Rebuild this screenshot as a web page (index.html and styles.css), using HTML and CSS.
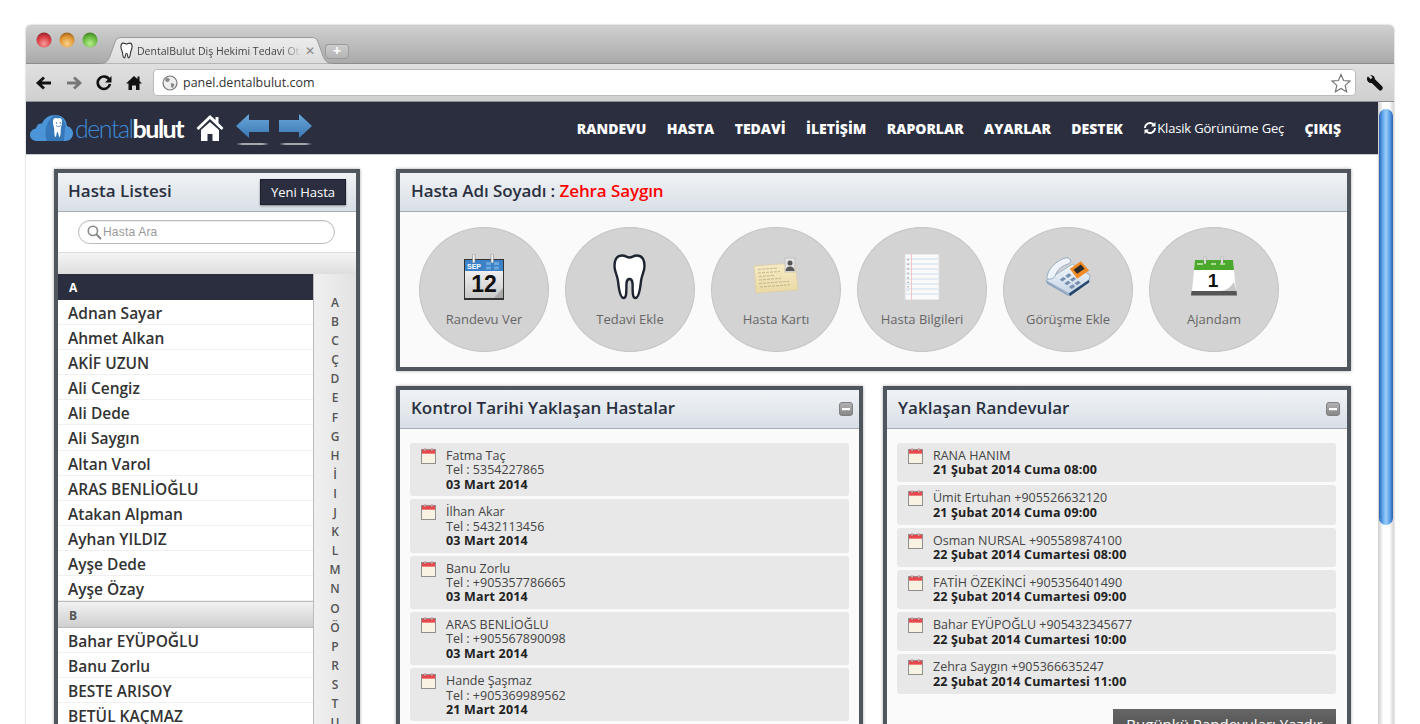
FILE: index.html
```html
<!DOCTYPE html>
<html lang="tr">
<head>
<meta charset="utf-8">
<title>DentalBulut</title>
<link rel="stylesheet" href="styles.css">
</head>
<body>
<svg class="defs" width="0" height="0">
  <defs>
    <radialGradient id="lr" cx=".5" cy=".75" r=".7"><stop offset="0" stop-color="#f89a9a"/><stop offset=".7" stop-color="#d63a40"/><stop offset="1" stop-color="#9c2a30"/></radialGradient>
    <radialGradient id="ly" cx=".5" cy=".75" r=".7"><stop offset="0" stop-color="#fbd08c"/><stop offset=".7" stop-color="#dd9530"/><stop offset="1" stop-color="#a86c20"/></radialGradient>
    <radialGradient id="lg" cx=".5" cy=".75" r=".7"><stop offset="0" stop-color="#b8ee8e"/><stop offset=".7" stop-color="#66b83c"/><stop offset="1" stop-color="#4a8a2a"/></radialGradient>
    <linearGradient id="arrow" x1="0" y1="0" x2="0" y2="1"><stop offset="0" stop-color="#6aa6d8"/><stop offset="1" stop-color="#3a78b4"/></linearGradient>
    <linearGradient id="paper" x1="0" y1="0" x2="0" y2="1"><stop offset="0" stop-color="#fff"/><stop offset="1" stop-color="#c9c9c9"/></linearGradient>
    <linearGradient id="card" x1="0" y1="0" x2="0" y2="1"><stop offset="0" stop-color="#f6ebc6"/><stop offset="1" stop-color="#ead9a4"/></linearGradient>
    <linearGradient id="tabfill" x1="0" y1="0" x2="0" y2="1"><stop offset="0" stop-color="#ececec"/><stop offset="1" stop-color="#dcdcdc"/></linearGradient>
    <linearGradient id="mingrad" x1="0" y1="0" x2="0" y2="1"><stop offset="0" stop-color="#b4b4b4"/><stop offset="1" stop-color="#858585"/></linearGradient>
    <linearGradient id="phone" x1="0" y1="0" x2="0" y2="1"><stop offset="0" stop-color="#f2f6fb"/><stop offset="1" stop-color="#c6d6e8"/></linearGradient>
    <symbol id="cal" viewBox="0 0 16 17">
      <rect x=".5" y="1.500" width="15" height="15" fill="#f8f2e2" stroke="#8a8a8a"/>
      <rect x="1" y="2" width="14" height="4" fill="#e8474c"/>
      <rect x="3.500" y=".5" width="1.600" height="3" rx=".8" fill="#ddd" stroke="#a33" stroke-width=".4"/>
      <rect x="10.800" y=".5" width="1.600" height="3" rx=".8" fill="#ddd" stroke="#a33" stroke-width=".4"/>
    </symbol>
    <symbol id="minus" viewBox="0 0 14 14">
      <rect x=".5" y=".5" width="13" height="13" rx="2.500" fill="url(#mingrad)" stroke="#808080"/>
      <rect x="3" y="6" width="8" height="2.200" fill="#fff"/>
    </symbol>
  </defs>
</svg>
<div class="window">
  <div class="tabstrip">
    <div class="lights">
      <svg class="light" viewBox="0 0 16 16"><circle cx="8" cy="8" r="7.500" fill="url(#lr)"/></svg>
      <svg class="light" viewBox="0 0 16 16"><circle cx="8" cy="8" r="7.500" fill="url(#ly)"/></svg>
      <svg class="light" viewBox="0 0 16 16"><circle cx="8" cy="8" r="7.500" fill="url(#lg)"/></svg>
    </div>
    <div class="tab">
      <svg class="tabshape" viewBox="0 0 233 27"><path d="M0 26.500C6 26.500 8 24 10 19L15 5C16 2 18 .5 21 .5H212C215 .5 217 2 218 5L223 19C225 24 227 26.500 233 26.500" fill="url(#tabfill)" stroke="#999"/></svg>
      <svg class="fav" viewBox="0 0 14 18"><path d="M3.500 1C1.500 1 1 3 1 5c0 3 1.500 4 1.800 7 .2 2 .6 5 1.900 5 1.200 0 .8-5 2.300-5s1.100 5 2.300 5c1.300 0 1.700-3 1.900-5 .3-3 1.800-4 1.800-7 0-2-.5-4-2.500-4C9 1 8.500 2 7 2S5 1 3.500 1z" fill="#fff" stroke="#333" stroke-width="1.200"/></svg>
      <span class="tab-title">DentalBulut Diş Hekimi Tedavi Ot</span>
      <span class="tab-x">✕</span>
    </div>
    <div class="newtab"><span>+</span></div>
  </div>
  <div class="toolbar">
    <svg class="tb" viewBox="0 0 18 16"><path d="M16 8H4M9 2.500 3 8l6 5.500" fill="none" stroke="#111" stroke-width="2.800"/></svg>
    <svg class="tb" viewBox="0 0 18 16"><path d="M2 8h12M9 2.500 15 8l-6 5.500" fill="none" stroke="#777" stroke-width="2.800"/></svg>
    <svg class="tb" viewBox="0 0 18 16"><path d="M14.500 5A6.200 6.200 0 1 0 15 9" fill="none" stroke="#111" stroke-width="2.600"/><path d="M16.500 1v6.500H10z" fill="#111"/></svg>
    <svg class="tb" viewBox="0 0 18 16"><path d="M9 1 1 8.500h2.500V15H7v-4.500h4V15h3.500V8.500H17L14.500 6V1.500H12.500V4z" fill="#111"/></svg>
    <div class="urlbar">
      <svg class="globe" viewBox="0 0 16 16"><circle cx="8" cy="8" r="7" fill="#eee" stroke="#777" stroke-width="1.200"/><path d="M5 2.500 8 4 7 6.500 4.500 7 3 5zM9 8l3.500 1-1.500 4-2-1z" fill="#888"/></svg>
      <span class="url">panel.dentalbulut.com</span>
      <svg class="star" viewBox="0 0 20 20"><path d="M10 1.500 12.600 7.500l6.400.6-4.800 4.300 1.400 6.300L10 15.400l-5.600 3.300 1.400-6.300L1 8.100l6.400-.6z" fill="#fff" stroke="#777" stroke-width="1.200"/></svg>
    </div>
    <svg class="wrench" viewBox="0 0 18 18"><path d="M2 1.500 5 4.500 7 2.500 4.500.5C7 0 9.500 1.500 9.500 4.500L17 12c1 1 1 2 .2 3.500-1 1.500-2.500 1.500-3.500.5L6 8.500C3 8.800.8 6.500 1 3.500z" fill="#111" transform="translate(0 1)"/></svg>
  </div>
  <div class="viewport">
    <div class="page">
      <header class="nav">
        <div class="brand">
          <svg class="cloud" viewBox="0 0 43 28"><path d="M7 27C3 27 0 24.500 0 21c0-3.500 2.500-6 6-6.500C6.500 11 9 9 12 9.500 14.500 4 19 1 25 1c7 0 11.500 4.500 12 11 3.500 1 6 3.500 6 7.500C43 24 39.500 27 35.500 27z" fill="#4b94d8"/><path d="M17 27C13.500 19 15.500 8 24 1.500c7 .5 11 5 11.500 10.500-1 5-1 10-1.500 15z" fill="#3577b8"/><path d="M26 4c-2.500 0-3 1.300-3 4 0 3.500 1 4 1.200 7 .1 2 .1 8 1.300 8 1.100 0 .8-5 2-5s.9 5 2 5c1.200 0 1.200-6 1.300-8 .2-3 1.200-3.500 1.200-7 0-2.700-.5-4-3-4-1 0-1 .5-1.500.5S27 4 26 4z" fill="#fff"/><circle cx="26.500" cy="9" r=".8" fill="#3577b8"/><circle cx="30.500" cy="9" r=".8" fill="#3577b8"/><path d="M26 11.500c1.500 1.500 3.500 1.500 5 0" fill="none" stroke="#3577b8" stroke-width=".8"/></svg>
          <span class="logo-text"><span class="logo-thin">dental</span><span class="logo-bold">bulut</span></span>
          <svg class="home" viewBox="0 0 28 28"><path d="M14 1 .5 14l2 2L14 5l11.500 11 2-2-5-5V3h-3v3z" fill="#fff"/><path d="M5 16 14 8l9 8v11h-6.500v-7h-5v7H5z" fill="#fff"/></svg>
          <div class="arrow-wrap">
            <div class="arrow-item"><svg class="arrow" viewBox="0 0 33 24"><path d="M0 12 13 0v6h20v12H13v6z" fill="url(#arrow)"/></svg></div>
            <div class="arrow-item"><svg class="arrow" viewBox="0 0 33 24"><path d="M33 12 20 0v6H0v12h20v6z" fill="url(#arrow)"/></svg></div>
          </div>
        </div>
        <nav class="menu">
          <a class="m">RANDEVU</a><a class="m">HASTA</a><a class="m">TEDAVİ</a><a class="m">İLETİŞİM</a><a class="m">RAPORLAR</a><a class="m">AYARLAR</a><a class="m">DESTEK</a>
          <a class="m-classic"><svg class="sync" viewBox="0 0 14 14"><path d="M2 7a5 5 0 0 1 8.500-3.500M12 7a5 5 0 0 1-8.500 3.500" fill="none" stroke="#fff" stroke-width="1.800"/><path d="M12.500 1v4.500H8zM1.500 13V8.500H6z" fill="#fff"/></svg>Klasik Görünüme Geç</a>
          <a class="m">ÇIKIŞ</a>
        </nav>
      </header>
      <div class="content">
        <aside class="panel side">
          <div class="phead"><h2>Hasta Listesi</h2><span class="newbtn">Yeni Hasta</span></div>
          <div class="searchrow"><div class="search">
            <svg class="mag" viewBox="0 0 14 14"><circle cx="5.500" cy="5.500" r="4.300" fill="none" stroke="#888" stroke-width="1.500"/><path d="M8.500 8.500 13 13" stroke="#888" stroke-width="2"/></svg>
            <span>Hasta Ara</span></div></div>
          <div class="strip"></div>
          <div class="listwrap">
            <div class="list">
              <div class="lh lh-dark">A</div>
              <div class="row">Adnan Sayar</div><div class="row">Ahmet Alkan</div><div class="row">AKİF UZUN</div><div class="row">Ali Cengiz</div><div class="row">Ali Dede</div><div class="row">Ali Saygın</div><div class="row">Altan Varol</div><div class="row">ARAS BENLİOĞLU</div><div class="row">Atakan Alpman</div><div class="row">Ayhan YILDIZ</div><div class="row">Ayşe Dede</div><div class="row">Ayşe Özay</div>
              <div class="lh">B</div>
              <div class="row">Bahar EYÜPOĞLU</div><div class="row">Banu Zorlu</div><div class="row">BESTE ARISOY</div><div class="row">BETÜL KAÇMAZ</div>
            </div>
            <div class="alpha"><span>A</span><span>B</span><span>C</span><span>Ç</span><span>D</span><span>E</span><span>F</span><span>G</span><span>H</span><span>İ</span><span>I</span><span>J</span><span>K</span><span>L</span><span>M</span><span>N</span><span>O</span><span>Ö</span><span>P</span><span>R</span><span>S</span><span>T</span><span>U</span></div>
          </div>
        </aside>
        <main class="main">
          <section class="panel summary">
            <div class="phead"><h2>Hasta Adı Soyadı : <span class="red">Zehra Saygın</span></h2></div>
            <div class="circles">
              <div class="circle">
                <svg class="ci" viewBox="0 0 42 46"><path d="M1 5h40v41H1z" fill="#333"/><rect x="2" y="6" width="38" height="38" fill="url(#paper)"/><rect x="2" y="6" width="38" height="11" fill="#3b82c8"/><path d="M23 8h5v3h-5zM31 8h5v3h-5zM23 12.500h5v3h-5zM31 12.500h5v3h-5z" fill="#6aa6dc"/><text x="4" y="14.500" class="cal-m">SEP</text><text x="21" y="38" class="cal-d" text-anchor="middle">12</text><rect x="9.500" y="0" width="2.500" height="9" rx="1.200" fill="#f2f2f2" stroke="#777" stroke-width=".5"/><rect x="28" y="0" width="2.500" height="9" rx="1.200" fill="#f2f2f2" stroke="#777" stroke-width=".5"/><path d="M40 34 31 44h9z" fill="#aaa"/></svg>
                <span class="clabel">Randevu Ver</span>
              </div>
              <div class="circle">
                <svg class="ci" viewBox="0 0 42 46"><path d="M13 1.500C7 1.500 5.500 7 5.500 12c0 6 2.500 8 3.500 15 .6 5 1.500 17 5.500 17s2.500-11 3-15c.3-2.500 1.500-4 3-4s2.700 1.500 3 4c.5 4-1 15 3 15s4.900-12 5.500-17c1-7 3.500-9 3.500-15 0-5-1.500-10.500-7.500-10.500-4 0-4.500 2-7.500 2s-3.500-2-7.500-2z" fill="#fff" stroke="#1e2430" stroke-width="2.400"/></svg>
                <span class="clabel">Tedavi Ekle</span>
              </div>
              <div class="circle">
                <svg class="ci" viewBox="0 0 46 46"><path d="M1 12 42 9l3 27L3 39z" fill="url(#card)" stroke="#dccb98" stroke-width=".6"/><path d="M5 15.500l20-1.500M5 19l22-1.500M6 22.500l16-1.200M6 26l22-1.600M6 29.500l30-2.200M7 33l30-2.200" stroke="#a89a70" stroke-width=".6" stroke-dasharray="3 1"/><rect x="32" y="4" width="10" height="14" fill="#e2e2e2" stroke="#aaa" stroke-width=".5"/><circle cx="37" cy="9" r="2.500" fill="#555"/><path d="M32.500 17c0-3 2-4.500 4.500-4.500s4.500 1.500 4.500 4.500z" fill="#555"/></svg>
                <span class="clabel">Hasta Kartı</span>
              </div>
              <div class="circle">
                <svg class="ci" viewBox="0 0 42 46"><rect x="4" y="0" width="34" height="46" fill="#fafafa" stroke="#ddd"/><path d="M5 5h32M5 10h32M5 15h32M5 20h32M5 25h32M5 30h32M5 35h32M5 40h32" stroke="#cddced"/><path d="M10.500 0v46" stroke="#f3c4c4"/><path d="M7 5v32" stroke="#aaa" stroke-dasharray="1.500 3" stroke-width="1.500"/></svg>
                <span class="clabel">Hasta Bilgileri</span>
              </div>
              <div class="circle">
                <svg class="ci" viewBox="0 0 50 42"><path d="M1 25 30 7l19 12-1 5-22 15z" fill="url(#phone)" stroke="#6c88a6" stroke-width=".6"/><path d="M1 25 26 40v2L2 28z" fill="#8aa4c0"/><path d="M26 39 48 24v3L27 42z" fill="#24466e"/><path d="M27 12 39 4l9 10-13 9z" fill="#f08a24"/><path d="M31 13l8-5.500 4 4.500-8 5.500z" fill="#2a2a2a"/><path d="M2 22C3 12 12 3 23 0c3 0 5 2 5 4s-3 3-6 4c-6 3-9 6-11 12-2 4-9 4-9 2z" fill="#eef3f9" stroke="#7c96b2" stroke-width=".8"/><path d="M16 24l4-3 3 2-4 3zM22 20l4-3 3 2-4 3zM21 28l4-3 3 2-4 3zM27 24l4-3 3 2-4 3zM26 32l4-3 3 2-4 3zM32 28l4-3 3 2-4 3z" fill="#7890ac"/></svg>
                <span class="clabel">Görüşme Ekle</span>
              </div>
              <div class="circle">
                <svg class="ci" viewBox="0 0 46 42"><path d="M4 4h38l3 31H1z" fill="#fff"/><path d="M.5 35h45l.5 4.500H0z" fill="#555"/><path d="M4 4h38l1 10H3z" fill="#4aa82c"/><path d="M6 7h6v2H6zM20 7h5v2h-5zM29 7h5v2h-5z" fill="#a8dc8e"/><path d="M28 35c7 0 11-3 15-9l2 9z" fill="#c8c8c8"/><rect x="13" y="0" width="2" height="8" rx="1" fill="#eee" stroke="#888" stroke-width=".4"/><rect x="30" y="0" width="2" height="8" rx="1" fill="#eee" stroke="#888" stroke-width=".4"/><text x="22" y="31" class="cal-g" text-anchor="middle">1</text></svg>
                <span class="clabel">Ajandam</span>
              </div>
            </div>
          </section>
          <div class="cols">
            <section class="panel col col-left">
              <div class="phead"><h2>Kontrol Tarihi Yaklaşan Hastalar</h2><svg class="min"><use href="#minus"/></svg></div>
              <div class="items">
                <div class="item tall"><svg class="ical"><use href="#cal"/></svg><div class="it">Fatma Taç<br>Tel : 5354227865<br><b>03 Mart 2014</b></div></div>
                <div class="item tall"><svg class="ical"><use href="#cal"/></svg><div class="it">İlhan Akar<br>Tel : 5432113456<br><b>03 Mart 2014</b></div></div>
                <div class="item tall"><svg class="ical"><use href="#cal"/></svg><div class="it">Banu Zorlu<br>Tel : +905357786665<br><b>03 Mart 2014</b></div></div>
                <div class="item tall"><svg class="ical"><use href="#cal"/></svg><div class="it">ARAS BENLİOĞLU<br>Tel : +905567890098<br><b>03 Mart 2014</b></div></div>
                <div class="item tall"><svg class="ical"><use href="#cal"/></svg><div class="it">Hande Şaşmaz<br>Tel : +905369989562<br><b>21 Mart 2014</b></div></div>
              </div>
            </section>
            <section class="panel col col-right">
              <div class="phead"><h2>Yaklaşan Randevular</h2><svg class="min"><use href="#minus"/></svg></div>
              <div class="items">
                <div class="item"><svg class="ical"><use href="#cal"/></svg><div class="it">RANA HANIM<br><b>21 Şubat 2014 Cuma 08:00</b></div></div>
                <div class="item"><svg class="ical"><use href="#cal"/></svg><div class="it">Ümit Ertuhan +905526632120<br><b>21 Şubat 2014 Cuma 09:00</b></div></div>
                <div class="item"><svg class="ical"><use href="#cal"/></svg><div class="it">Osman NURSAL +905589874100<br><b>22 Şubat 2014 Cumartesi 08:00</b></div></div>
                <div class="item"><svg class="ical"><use href="#cal"/></svg><div class="it">FATİH ÖZEKİNCİ +905356401490<br><b>22 Şubat 2014 Cumartesi 09:00</b></div></div>
                <div class="item"><svg class="ical"><use href="#cal"/></svg><div class="it">Bahar EYÜPOĞLU +905432345677<br><b>22 Şubat 2014 Cumartesi 10:00</b></div></div>
                <div class="item"><svg class="ical"><use href="#cal"/></svg><div class="it">Zehra Saygın +905366635247<br><b>22 Şubat 2014 Cumartesi 11:00</b></div></div>
                <div class="printrow"><span class="print">Bugünkü Randevuları Yazdır</span></div>
              </div>
            </section>
          </div>
        </main>
      </div>
    </div>
    <div class="scrollbar"><div class="thumb"></div></div>
  </div>
</div>
</body>
</html>
```
FILE: styles.css
```css
* { box-sizing: border-box; }
html, body { margin: 0; height: 724px; overflow: hidden; background: #fff; }
body { padding: 25px 26px 0; font-family: "Open Sans", "Liberation Sans", sans-serif; color: #333; }
.defs { display: block; height: 0; }
.window { width: 1368px; height: 760px; border-radius: 5px 5px 0 0; box-shadow: 0 0 2px rgba(0,0,0,.35); display: flex; flex-direction: column; overflow: hidden; }

.tabstrip { height: 39px; flex: none; background: linear-gradient(#d0d0d0, #aaa); border-bottom: 1px solid #8c8c8c; display: flex; align-items: flex-end; padding-left: 10px; }
.lights { display: flex; gap: 7px; align-self: flex-start; padding-top: 7px; }
.light { width: 16px; height: 16px; display: block; }
.tab { width: 233px; height: 27px; margin-left: 2px; position: relative; display: flex; align-items: center; padding-left: 20px; z-index: 1; margin-bottom: -1px; }
.tabshape { position: absolute; inset: 0; width: 233px; height: 27px; z-index: -1; }
.fav { width: 13px; height: 17px; flex: none; }
.tab-title { width: 165px; margin-left: 4px; font-size: 10.500px; color: #444; white-space: nowrap; overflow: hidden; -webkit-mask-image: linear-gradient(90deg, #000 88%, transparent); mask-image: linear-gradient(90deg, #000 88%, transparent); }
.tab-x { font-size: 12px; color: #888; font-weight: 700; margin-left: 3px; font-family: "DejaVu Sans", sans-serif; }
.newtab { width: 24px; height: 15px; margin: 0 0 4px -8px; background: linear-gradient(#ccc, #b4b4b4); border: 1px solid #999; border-radius: 3px 3px 4px 4px; color: #fff; font-size: 14px; font-weight: 700; line-height: 12px; text-align: center; }

.toolbar { height: 38px; flex: none; background: linear-gradient(#e0e0e0, #cfcfcf); border-bottom: 1px solid #8f8f8f; display: flex; align-items: center; padding: 0 7px 0 9px; gap: 12px; }
.tb { width: 18px; height: 16px; flex: none; }
.urlbar { width: 1203px; height: 27px; margin-left: -2px; background: #fff; border: 1px solid #bbb; border-radius: 4px; display: flex; align-items: center; padding: 0 4px 0 8px; }
.globe { width: 16px; height: 16px; flex: none; }
.url { margin-left: 5px; font-size: 12.500px; color: #333; flex: 1; }
.star { width: 20px; height: 20px; flex: none; }
.wrench { width: 17px; height: 17px; flex: none; margin-left: -2px; }

.viewport { flex: 1; display: flex; min-height: 0; }
.page { flex: 1; min-width: 0; }
.scrollbar { width: 16px; flex: none; background: linear-gradient(90deg, #cfcfcf, #fff 35%, #fff 70%, #d4d4d4); padding: 7px 1px 0 1px; }
.thumb { height: 416px; border-radius: 7px; background: linear-gradient(90deg, #2a62b0, #5da3ea 25%, #9ccdf6 50%, #5da3ea 75%, #2a62b0); }

.nav { height: 53px; background: #2a2e3f; display: flex; align-items: center; justify-content: space-between; padding: 0 37px 0 4px; border-bottom: 1px solid #c9ccd2; }
.brand { display: flex; align-items: center; }
.cloud { width: 43px; height: 28px; flex: none; }
.logo-text { font-size: 25px; letter-spacing: -1.500px; margin-left: 2px; line-height: 1; font-family: "Lato", sans-serif; }
.logo-thin { font-weight: 300; color: #3d8bd8; }
.logo-bold { font-weight: 700; color: #fff; }
.home { width: 28px; height: 28px; margin-left: 13px; flex: none; }
.arrow-wrap { display: flex; gap: 10px; margin: 3px 0 0 12px; }
.arrow-item { display: flex; flex-direction: column; gap: 5px; }
.arrow-item::after { content: ""; height: 2px; background: linear-gradient(90deg, transparent, #a4a6ae 20%, #a4a6ae 80%, transparent); }
.arrow { width: 33px; height: 24px; display: block; }

.menu { display: flex; align-items: center; gap: 20.400px; color: #fff; }
.m { font-size: 14px; font-weight: 800; }
.m-classic { font-size: 13px; display: flex; align-items: center; letter-spacing: -.19px; }
.sync { width: 14px; height: 14px; }

.content { display: flex; gap: 36px; padding: 14px 27px 0 28px; }
.panel { border: 4px solid #50565e; background: #fafafa; box-shadow: 0 0 3px rgba(0,0,0,.35); }
.side { width: 306px; flex: none; height: 700px; }
.side .phead { padding: 0 10px 0; }
.side h2 { margin-top: -3px; }
.main { flex: 1; min-width: 0; }
.phead { height: 39px; background: linear-gradient(#f0f3f6, #d8dfe6); border-bottom: 1px solid #a7adb6; display: flex; align-items: center; justify-content: space-between; padding: 0 6px 0 11px; }
.phead h2 { margin: -3px 0 0; font-size: 17px; font-weight: 600; color: #2a3040; }
.summary h2 { letter-spacing: -.1px; }
.red { color: #f00; }
.newbtn { width: 86px; height: 26px; background: #2a2e3f; border: 1px solid #1c1f2c; box-shadow: 0 1px 2px rgba(0,0,0,.4); color: #fff; font-size: 13px; display: flex; align-items: center; justify-content: center; }
.searchrow { height: 40px; padding: 8px 21px 0 20px; background: #fff; }
.search { height: 24px; border: 1px solid #bbb; border-radius: 12px; background: #fff; display: flex; align-items: center; padding-left: 8px; font: 12px "Liberation Sans", sans-serif; letter-spacing: .2px; color: #999; box-shadow: inset 0 1px 1px rgba(0,0,0,.08); }
.mag { width: 15px; height: 15px; margin-right: 1px; }
.strip { height: 22px; background: linear-gradient(#f4f4f4, #dedede); border-top: 1px solid #ddd; }
.listwrap { display: flex; }
.list { width: 256px; flex: none; background: #fff; border-right: 1px solid #bbb; }
.lh { height: 27px; padding-left: 11px; font-size: 12px; font-weight: 700; line-height: 27px; color: #555; background: linear-gradient(#f2f2f2, #cfcfcf); border-top: 1px solid #bbb; border-bottom: 1px solid #bbb; }
.lh-dark { height: 26px; line-height: 28px; background: #2a2e3f; color: #fff; border: 0; }
.row { height: 25.100px; line-height: 26.500px; padding-left: 10px; font-size: 15.500px; font-weight: 600; color: #333; border-bottom: 1px solid #f0f0f0; white-space: nowrap; }
.alpha { flex: 1; background: linear-gradient(90deg, #f0f0f0, #e2e2e2); display: flex; flex-direction: column; align-items: center; padding-top: 19px; }
.alpha span { height: 19.100px; line-height: 19px; font-size: 12px; font-weight: 600; color: #555; }

.summary { height: 202px; margin-bottom: 15px; }
.circles { display: flex; gap: 16px; padding: 15px 0 0 19px; }
.circle { width: 130px; height: 125px; border-radius: 50%; background: #d3d3d3; border: 1px solid #c5c5c5; display: flex; flex-direction: column; align-items: center; padding-top: 26px; }
.ci { width: 46px; height: 46px; display: block; }
.clabel { margin-top: 10px; font-size: 13px; color: #666; }
.cal-m { font: 700 7px "Liberation Sans", sans-serif; fill: #fff; }
.cal-d { font: 700 23px "Liberation Sans", sans-serif; fill: #111; }
.cal-g { font: 700 19px "Liberation Sans", sans-serif; fill: #111; }

.cols { display: flex; gap: 20px; }
.col { flex: 1; min-width: 0; height: 400px; }
.col-left { flex: none; width: 467px; }
.col-right .phead { padding-right: 7px; }
.min { width: 14px; height: 14px; flex: none; }
.items { padding: 14px 11px 0 10px; display: flex; flex-direction: column; gap: 3px; }
.col-left .items { padding-right: 10px; }
.item { min-height: 39.300px; background: #e8e8e8; border-radius: 3px; display: flex; padding: 5px 0 0 11px; }
.item.tall { height: 53.300px; }
.ical { width: 15px; height: 16px; flex: none; }
.it { margin-left: 10px; padding-top: 1px; font-size: 12.500px; line-height: 14.400px; color: #444; }
.it b { color: #222; font-weight: 700; letter-spacing: .17px; }
.printrow { display: flex; justify-content: flex-end; margin-top: 12px; }
.print { width: 223px; height: 30px; background: linear-gradient(#666, #4c4c4c); color: #fff; font-size: 15px; display: flex; align-items: center; justify-content: center; }
```
